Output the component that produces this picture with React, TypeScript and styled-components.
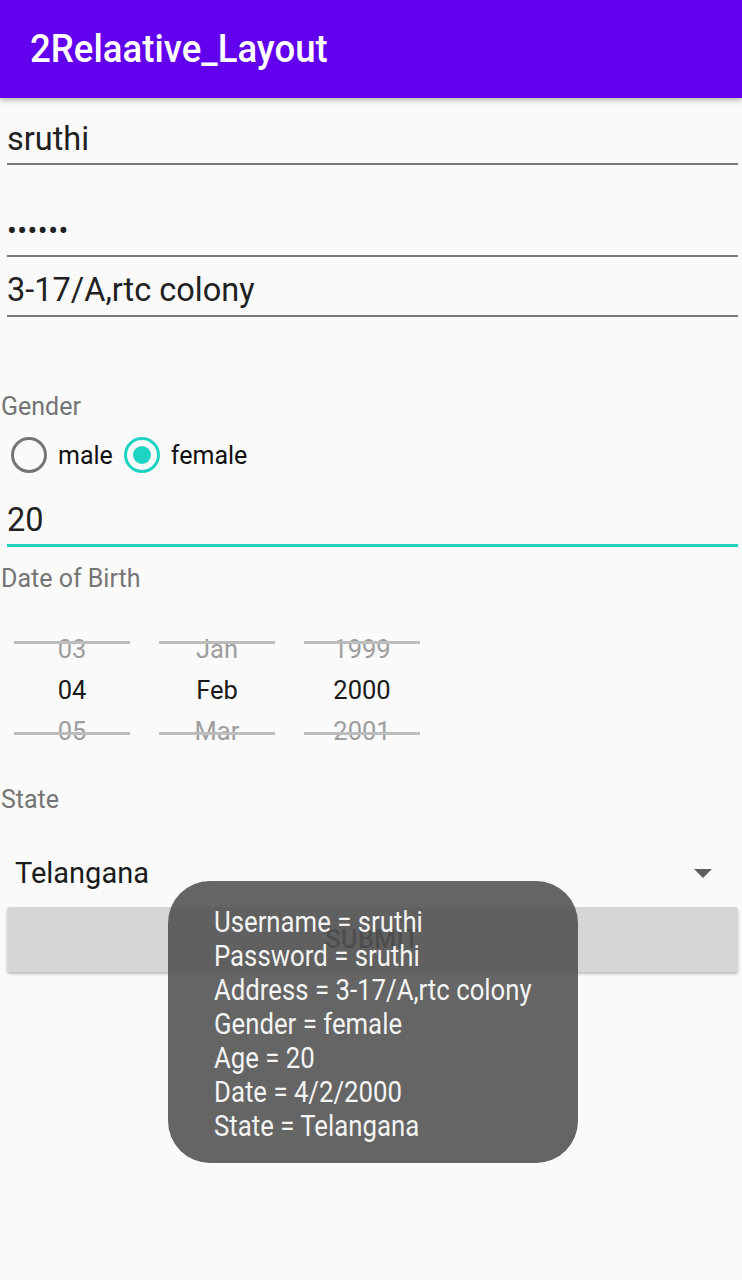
import React from "react";
import styled, { createGlobalStyle } from "styled-components";

const Global = createGlobalStyle`
  html, body { margin: 0; padding: 0; background: #fafafa; }
  body { font-family: Roboto, "Noto Sans", sans-serif; }
  * { box-sizing: border-box; }
`;

const Screen = styled.div`
  position: relative;
  width: 742px;
  height: 1280px;
  background: #fafafa;
  overflow: hidden;
`;

const AppBar = styled.header`
  height: 98px;
  background: #6200ee;
  display: flex;
  align-items: center;
  padding-left: 30px;
  box-shadow: 0 2px 6px rgba(0, 0, 0, 0.3);
  position: relative;
  z-index: 1;
`;

const Title = styled.h1`
  margin: 0;
  color: #fff;
  font-size: 38px;
  font-weight: 500;
  display: inline-block;
  transform: scaleX(0.963);
  transform-origin: left center;
  white-space: nowrap;
`;

const Form = styled.main`
  display: flex;
  flex-direction: column;
`;

const Field = styled.div<{ $h: number; $focus?: boolean }>`
  height: ${(p) => p.$h}px;
  margin: 0 4px 0 7px;
  display: flex;
  align-items: flex-end;
  border-bottom: ${(p) => (p.$focus ? "3px solid #1fd3c2" : "2px solid #7a7a7a")};
`;

const FieldText = styled.span<{ $pb: number }>`
  font-size: 32.5px;
  color: #212121;
  padding-bottom: ${(p) => p.$pb}px;
  line-height: 1;
  white-space: nowrap;
`;

const Dots = styled.span`
  font-size: 29px;
  color: #212121;
  letter-spacing: 0.5px;
  padding-bottom: 9px;
  line-height: 1;
`;

const Label = styled.div<{ $mt: number }>`
  margin-top: ${(p) => p.$mt}px;
  font-size: 25px;
  color: #757575;
  line-height: 28px;
  padding-left: 1px;
`;

const RadioRow = styled.div`
  display: flex;
  align-items: center;
  height: 48px;
  margin-top: 10px;
  padding-left: 11px;
`;

const RadioCircle = styled.span<{ $on?: boolean }>`
  width: 36px;
  height: 36px;
  border-radius: 50%;
  border: 3.5px solid ${(p) => (p.$on ? "#1fd3c2" : "#757575")};
  display: flex;
  align-items: center;
  justify-content: center;
  &::after {
    content: "";
    width: 18px;
    height: 18px;
    border-radius: 50%;
    background: ${(p) => (p.$on ? "#1fd3c2" : "transparent")};
  }
`;

const RadioLabel = styled.span`
  font-size: 25px;
  color: #111;
  margin-left: 11px;
  margin-right: 11px;
`;

const Pickers = styled.div`
  display: flex;
  gap: 29px;
  padding-left: 14px;
  margin-top: 35px;
`;

const PickerCol = styled.div`
  width: 116px;
  display: flex;
  flex-direction: column;
  align-items: center;
  position: relative;
`;

const PickerItem = styled.div<{ $sel?: boolean }>`
  height: 41px;
  display: flex;
  align-items: center;
  justify-content: center;
  font-size: 25.5px;
  color: ${(p) => (p.$sel ? "#1a1a1a" : "#9e9e9e")};
`;

const Divider = styled.div<{ $top: number }>`
  position: absolute;
  left: 0;
  right: 0;
  top: ${(p) => p.$top}px;
  height: 3px;
  background: #bdbdbd;
`;

const SpinnerRow = styled.div`
  display: flex;
  align-items: center;
  justify-content: space-between;
  height: 52px;
  margin-top: 33px;
  padding: 0 30px 0 15px;
`;

const SpinnerText = styled.span`
  font-size: 29px;
  color: #1a1a1a;
`;

const Arrow = styled.span`
  width: 0;
  height: 0;
  border-left: 9px solid transparent;
  border-right: 9px solid transparent;
  border-top: 9px solid #5f5f5f;
`;

const SubmitButton = styled.button`
  margin: 8px 4px 0 7px;
  height: 65px;
  border: none;
  border-radius: 3px;
  background: #d6d6d6;
  box-shadow: 0 2px 3px rgba(0, 0, 0, 0.25);
  font-family: Roboto, sans-serif;
  font-size: 25px;
  font-weight: 500;
  color: #3a3a3a;
  letter-spacing: 0.5px;
`;

const Toast = styled.div`
  position: absolute;
  left: 168px;
  top: 881px;
  width: 410px;
  height: 282px;
  border-radius: 42px;
  background: rgba(80, 80, 80, 0.88);
  padding: 24px 0 0 46px;
  display: flex;
  flex-direction: column;
`;

const ToastLine = styled.div`
  font-size: 29px;
  line-height: 34px;
  color: #f4f4f4;
  white-space: nowrap;
  transform: scaleX(0.888);
  transform-origin: left center;
`;

const toastLines = [
  "Username = sruthi",
  "Password = sruthi",
  "Address = 3-17/A,rtc colony",
  "Gender = female",
  "Age = 20",
  "Date = 4/2/2000",
  "State = Telangana",
];

const pickers = [
  ["03", "04", "05"],
  ["Jan", "Feb", "Mar"],
  ["1999", "2000", "2001"],
];

export default function App() {
  return (
    <Screen>
      <Global />
      <AppBar>
        <Title>2Relaative_Layout</Title>
      </AppBar>
      <Form>
        <Field $h={67}>
          <FieldText $pb={8}>sruthi</FieldText>
        </Field>
        <Field $h={92}>
          <Dots>••••••</Dots>
        </Field>
        <Field $h={60}>
          <FieldText $pb={9}>3-17/A,rtc colony</FieldText>
        </Field>
        <Label $mt={76}>Gender</Label>
        <RadioRow>
          <RadioCircle />
          <RadioLabel>male</RadioLabel>
          <RadioCircle $on />
          <RadioLabel>female</RadioLabel>
        </RadioRow>
        <Field $h={68} $focus>
          <FieldText $pb={8}>20</FieldText>
        </Field>
        <Label $mt={18}>Date of Birth</Label>
        <Pickers>
          {pickers.map((col, i) => (
            <PickerCol key={i}>
              <Divider $top={13} />
              <Divider $top={104} />
              {col.map((v, j) => (
                <PickerItem key={v} $sel={j === 1}>
                  {v}
                </PickerItem>
              ))}
            </PickerCol>
          ))}
        </Pickers>
        <Label $mt={35}>State</Label>
        <SpinnerRow>
          <SpinnerText>Telangana</SpinnerText>
          <Arrow />
        </SpinnerRow>
        <SubmitButton>SUBMIT</SubmitButton>
      </Form>
      <Toast>
        {toastLines.map((l) => (
          <ToastLine key={l}>{l}</ToastLine>
        ))}
      </Toast>
    </Screen>
  );
}
